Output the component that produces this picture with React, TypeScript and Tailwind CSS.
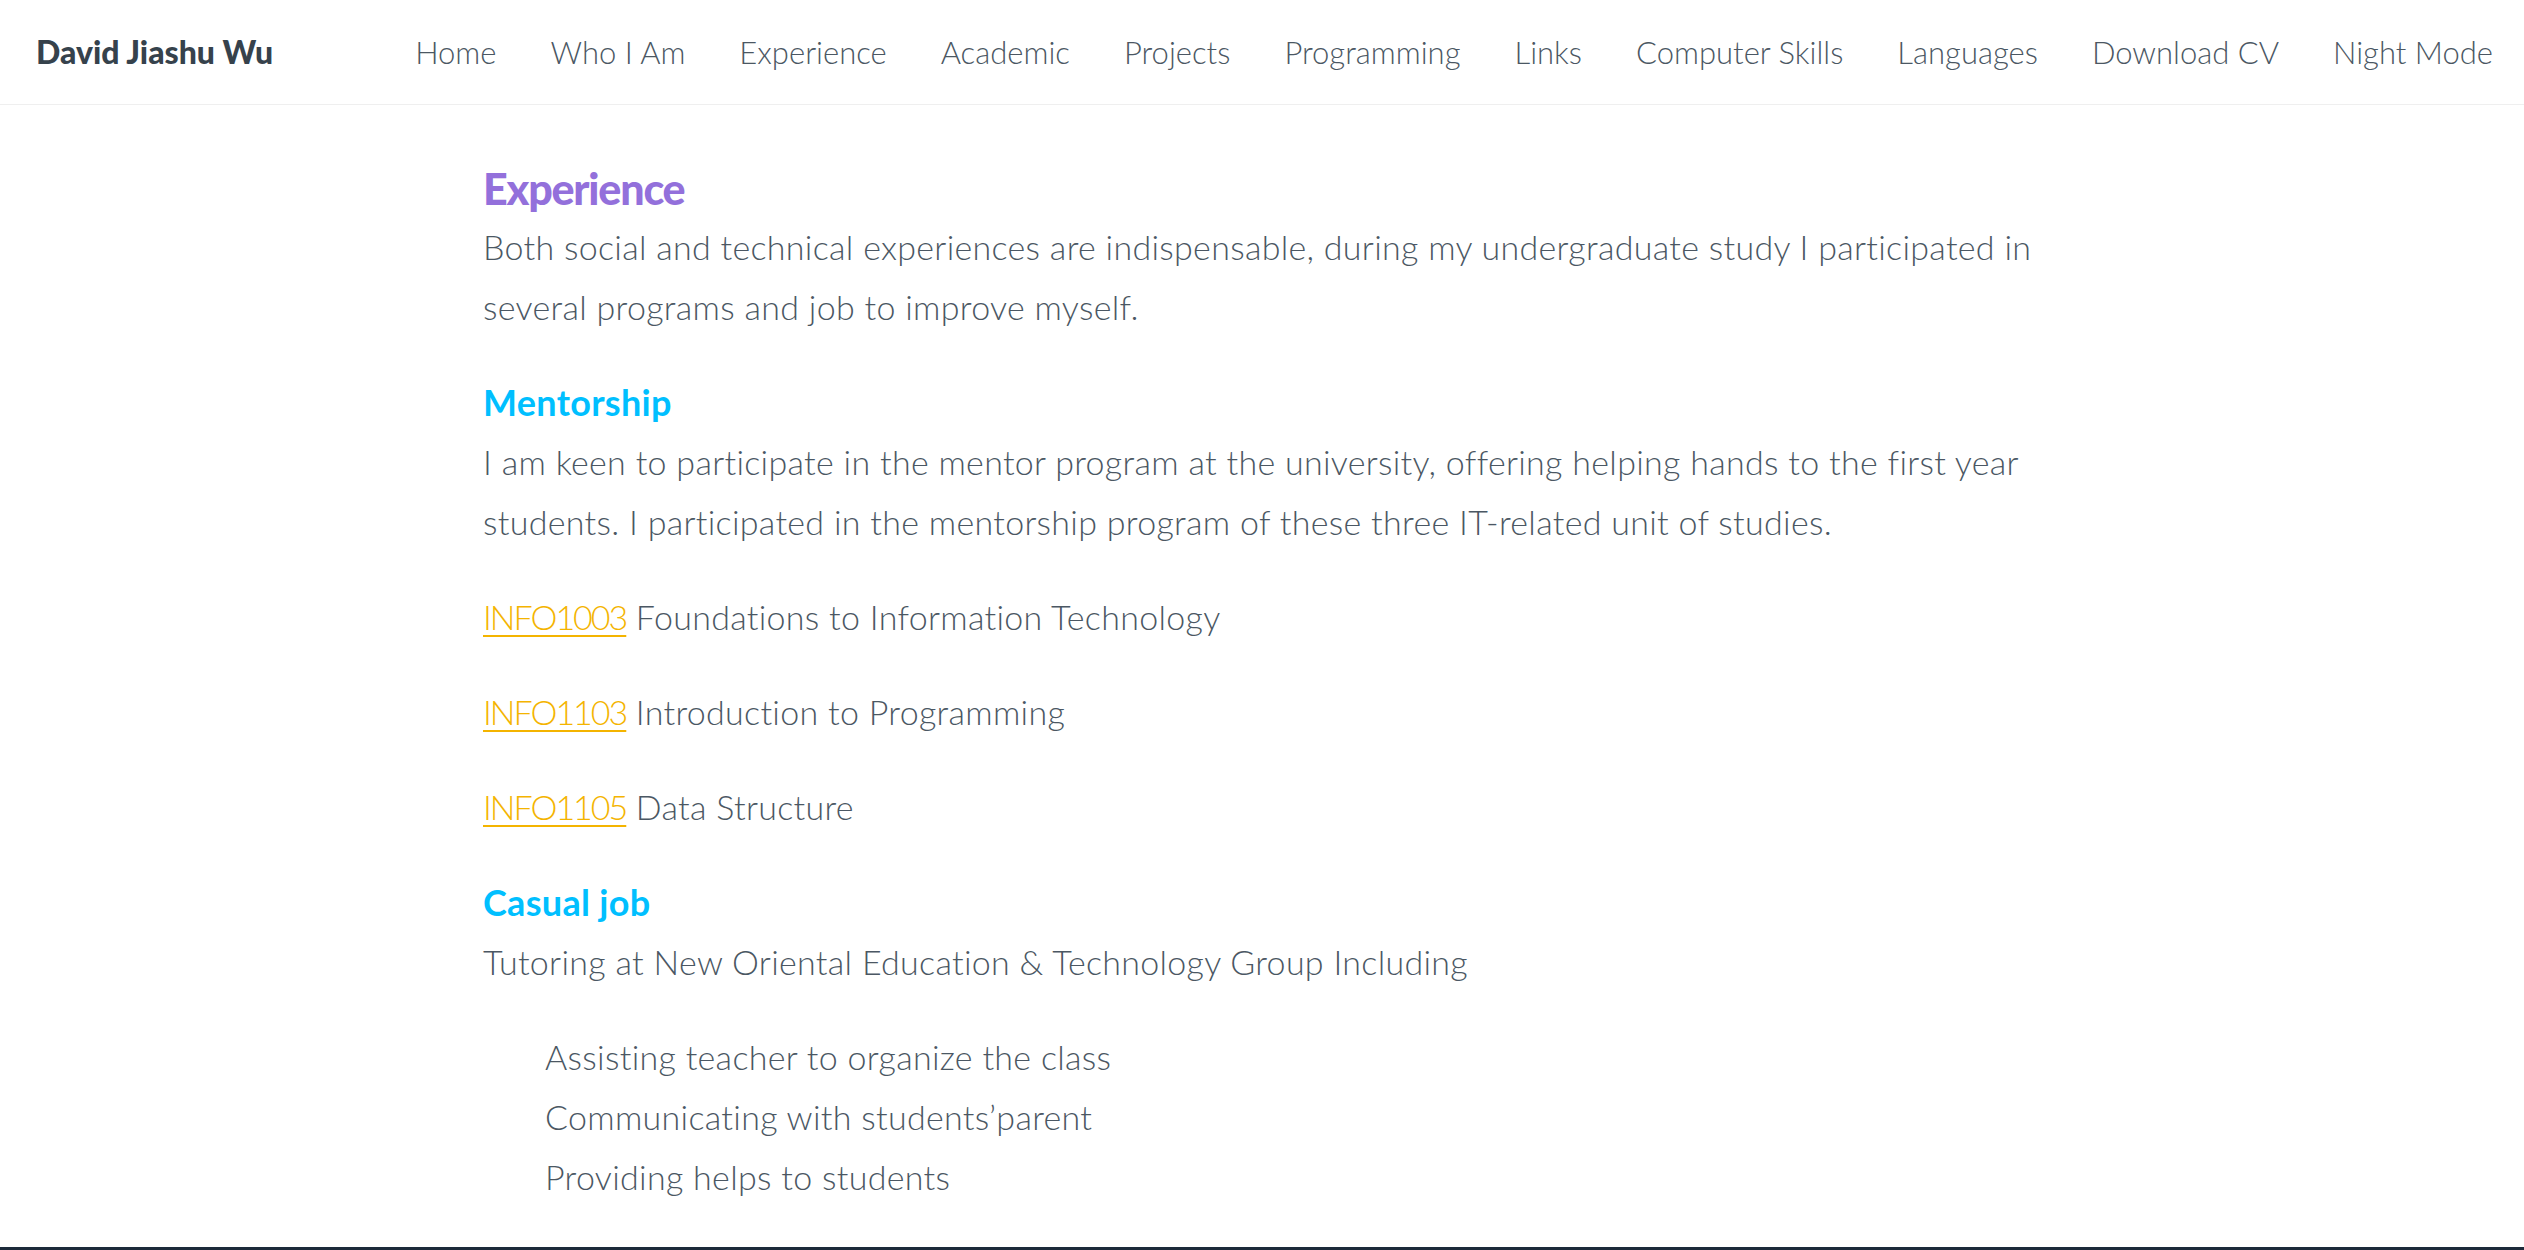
import React from "react";

const nav = [
  "Home",
  "Who I Am",
  "Experience",
  "Academic",
  "Projects",
  "Programming",
  "Links",
  "Computer Skills",
  "Languages",
  "Download CV",
  "Night Mode",
];

function Course({ code, title }: { code: string; title: string }) {
  return (
    <p className="leading-[60px] mb-[35px]">
      <a
        href="#"
        className="text-[#f4b400] underline decoration-[2px] underline-offset-[5px] tracking-[-2px]"
      >
        {code}
      </a>{" "}
      {title}
    </p>
  );
}

export default function App() {
  return (
    <div
      className="min-h-screen bg-white text-[#4b5763]"
      style={{ fontFamily: "Lato, 'Noto Sans', sans-serif" }}
    >
      <header className="h-[105px] flex items-center justify-between pl-[36px] pr-[31px] border-b border-[#efefef]">
        <div className="text-[32px] font-black text-[#36424c]">
          David Jiashu Wu
        </div>
        <nav className="flex items-center gap-[54px] text-[31px] font-light text-[#4b5763]">
          {nav.map((n) => (
            <a key={n} href="#" className="whitespace-nowrap">
              {n}
            </a>
          ))}
        </nav>
      </header>

      <main className="w-[1558px] mx-auto pt-[56px] pb-[40px] text-[34px] tracking-[0.3px] font-light">
        <h2 className="text-[43px] leading-[56px] font-black text-[#9370db] tracking-[-1.2px]">
          Experience
        </h2>
        <p className="leading-[60px] mb-[35px]">
          Both social and technical experiences are indispensable, during my
          undergraduate study I participated in
          <br />
          several programs and job to improve myself.
        </p>

        <h3 className="text-[36px] leading-[60px] font-bold text-[#00bfff]">
          Mentorship
        </h3>
        <p className="leading-[60px] mb-[35px]">
          I am keen to participate in the mentor program at the university,
          offering helping hands to the first year
          <br />
          students. I participated in the mentorship program of these three
          IT-related unit of studies.
        </p>

        <Course code="INFO1003" title="Foundations to Information Technology" />
        <Course code="INFO1103" title="Introduction to Programming" />
        <Course code="INFO1105" title="Data Structure" />

        <h3 className="text-[36px] leading-[60px] font-bold text-[#00bfff]">
          Casual job
        </h3>
        <p className="leading-[60px] mb-[35px]">
          Tutoring at New Oriental Education &amp; Technology Group Including
        </p>
        <ul className="pl-[62px] leading-[60px]">
          <li>Assisting teacher to organize the class</li>
          <li>Communicating with students’parent</li>
          <li>Providing helps to students</li>
        </ul>
      </main>
      <footer className="h-[200px] bg-[#1c2a3a]" />
    </div>
  );
}
